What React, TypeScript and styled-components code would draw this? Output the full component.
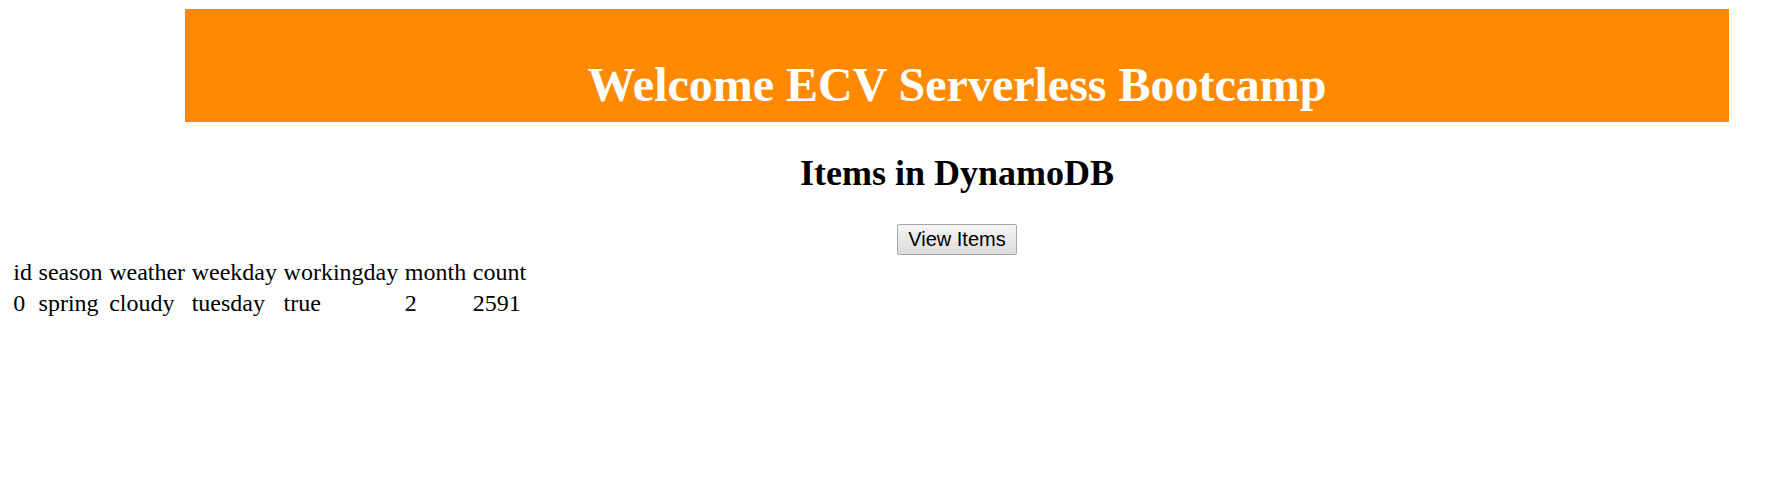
import React from "react";
import styled, { createGlobalStyle } from "styled-components";

const GlobalStyle = createGlobalStyle`
  html, body {
    margin: 0;
    padding: 0;
    background: #ffffff;
  }
  body {
    font-family: "Liberation Serif", "Times New Roman", serif;
    color: #000000;
  }
`;

const Page = styled.div`
  display: flex;
  flex-direction: column;
  align-items: stretch;
`;

const Banner = styled.header`
  margin: 9px 40px 0 185px;
  padding: 48px 0 10px;
  background: #ff8a00;
  text-align: center;
`;

const BannerTitle = styled.h1`
  margin: 0;
  font-size: 48px;
  font-weight: bold;
  color: #ffffff;
  font-family: "Liberation Serif", "Times New Roman", serif;
`;

const Content = styled.section`
  margin: 0 40px 0 185px;
  display: flex;
  flex-direction: column;
  align-items: center;
`;

const SectionTitle = styled.h2`
  margin: 30px 0 30px;
  font-size: 36px;
  font-weight: bold;
`;

const ViewButton = styled.button`
  font-family: "Liberation Sans", Arial, sans-serif;
  font-size: 20px;
  line-height: 23px;
  padding: 3px 10px;
  color: #000000;
  background: linear-gradient(#f5f5f5, #dcdcdc);
  border: 1px solid #a6a6a6;
  border-radius: 2px;
  cursor: pointer;
`;

const ItemsTable = styled.table`
  align-self: flex-start;
  margin: 1px 0 0 9px;
  border-spacing: 2px;
  font-size: 24px;
`;

const Cell = styled.td`
  padding: 1px 2.3px;
  text-align: left;
  white-space: nowrap;
`;

const columns = ["id", "season", "weather", "weekday", "workingday", "month", "count"];
const rows = [["0", "spring", "cloudy", "tuesday", "true", "2", "2591"]];

export default function App() {
  return (
    <>
      <GlobalStyle />
      <Page>
        <Banner>
          <BannerTitle>Welcome ECV Serverless Bootcamp</BannerTitle>
        </Banner>
        <Content>
          <SectionTitle>Items in DynamoDB</SectionTitle>
          <ViewButton type="button">View Items</ViewButton>
        </Content>
        <ItemsTable>
          <tbody>
            <tr>
              {columns.map((c) => (
                <Cell key={c}>{c}</Cell>
              ))}
            </tr>
            {rows.map((r, i) => (
              <tr key={i}>
                {r.map((v, j) => (
                  <Cell key={j}>{v}</Cell>
                ))}
              </tr>
            ))}
          </tbody>
        </ItemsTable>
      </Page>
    </>
  );
}
